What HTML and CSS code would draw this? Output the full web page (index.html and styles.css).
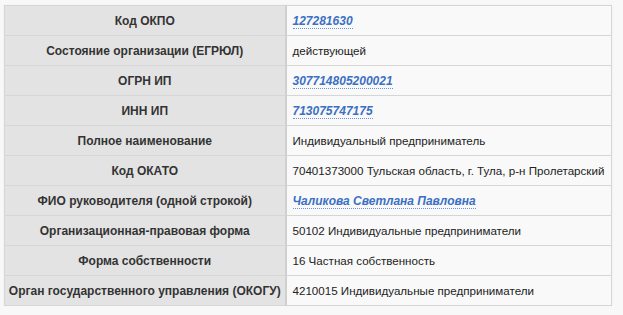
FILE: index.html
```html
<!DOCTYPE html>
<html lang="ru">
<head>
<meta charset="utf-8">
<link rel="stylesheet" href="styles.css">
</head>
<body>
<table class="info">
  <colgroup><col class="c-head"><col class="c-val"></colgroup>
  <tr><th>Код ОКПО</th><td><a class="lnk" href="#">127281630</a></td></tr>
  <tr><th>Состояние организации (ЕГРЮЛ)</th><td>действующей</td></tr>
  <tr><th>ОГРН ИП</th><td><a class="lnk" href="#">307714805200021</a></td></tr>
  <tr><th>ИНН ИП</th><td><a class="lnk" href="#">713075747175</a></td></tr>
  <tr><th>Полное наименование</th><td>Индивидуальный предприниматель</td></tr>
  <tr><th>Код ОКАТО</th><td>70401373000 Тульская область, г. Тула, р-н Пролетарский</td></tr>
  <tr><th>ФИО руководителя (одной строкой)</th><td><a class="lnk" href="#">Чаликова Светлана Павловна</a></td></tr>
  <tr><th>Организационная-правовая форма</th><td>50102 Индивидуальные предприниматели</td></tr>
  <tr><th>Форма собственности</th><td>16 Частная собственность</td></tr>
  <tr><th>Орган государственного управления (ОКОГУ)</th><td>4210015 Индивидуальные предприниматели</td></tr>
</table>
</body>
</html>
```
FILE: styles.css
```css
html, body {
  margin: 0;
  background: #f8f8f8;
}
body {
  padding: 5px 0 0 4px;
  font-family: "Liberation Sans", Arial, sans-serif;
  color: #222;
}
.info {
  border-collapse: collapse;
  table-layout: fixed;
  width: 608px;
  border: 1px solid #d6d6d6;
  box-shadow: 0 0 2px rgba(0,0,0,0.06);
}
.c-head { width: 281px; }
.info th, .info td {
  height: 29px;
  padding: 0;
  border: 1px solid #d6d6d6;
  white-space: nowrap;
  overflow: hidden;
}
.info th {
  background: #e3e3e3;
  color: #333;
  font-size: 12px;
  font-weight: bold;
  text-align: center;
  border-right: 2px solid #d0d0d0;
}
.info td {
  background: #f9f9f9;
  text-align: left;
  padding-left: 6px;
  font-size: 11.6px;
}
.lnk {
  color: #3b70c4;
  font-style: italic;
  font-weight: bold;
  font-size: 12px;
  text-decoration: none;
  border-bottom: 1px dotted #6a93d6;
}
```
